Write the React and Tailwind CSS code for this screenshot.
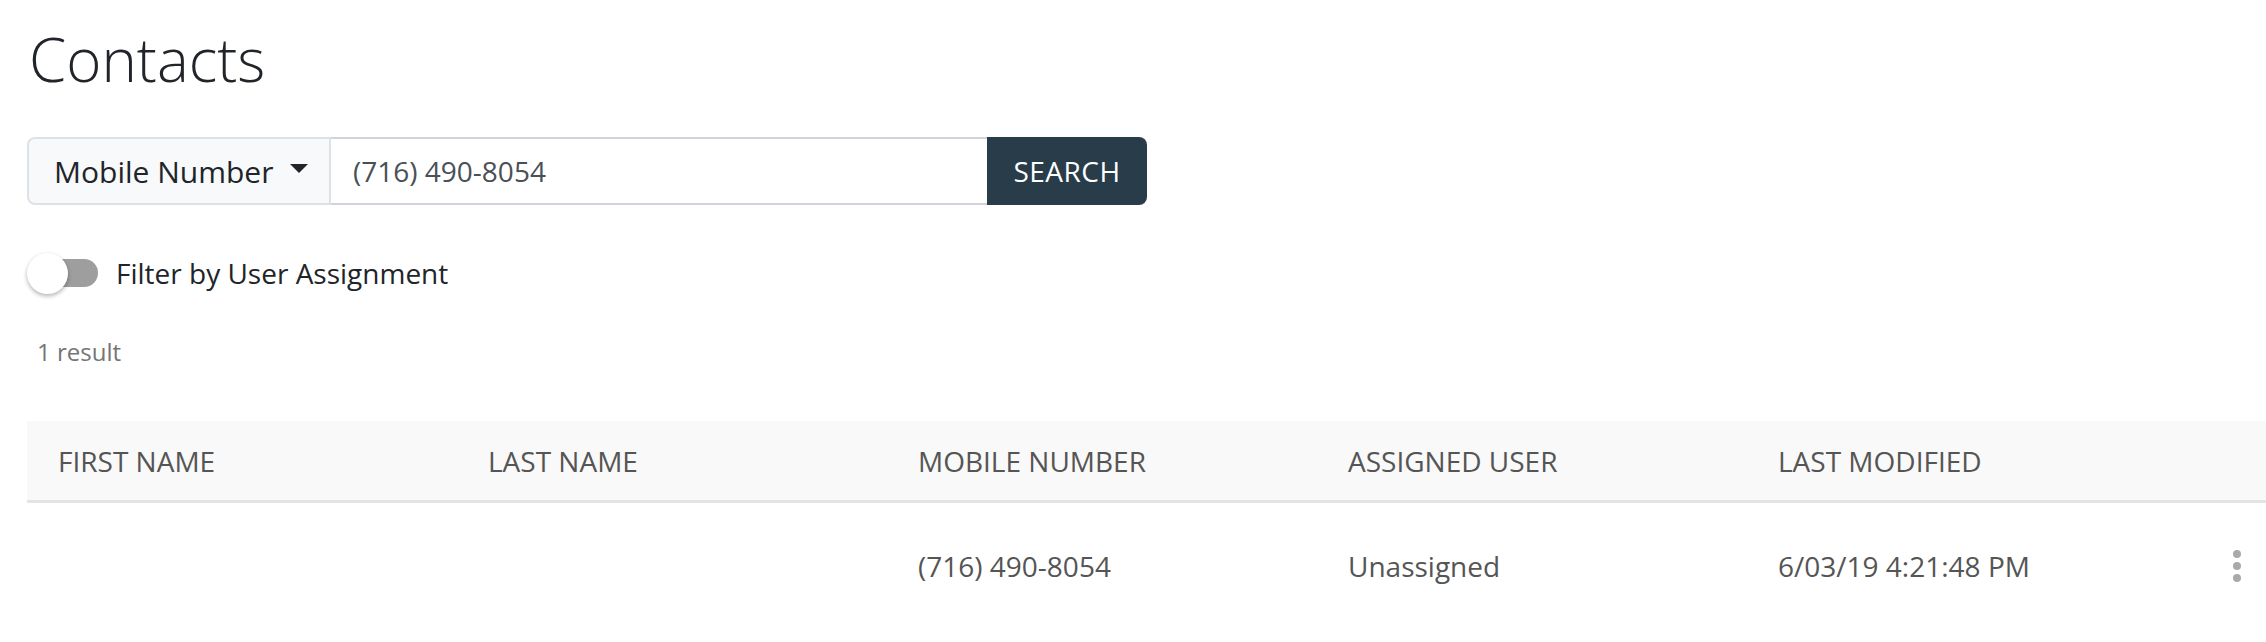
import React from "react";

const columns = ["FIRST NAME", "LAST NAME", "MOBILE NUMBER", "ASSIGNED USER", "LAST MODIFIED"];

const rows = [
  { first: "", last: "", mobile: "(716) 490-8054", user: "Unassigned", modified: "6/03/19 4:21:48 PM" },
];

function Toggle() {
  return (
    <div className="relative w-[71px] h-[41px] flex items-center">
      <div className="ml-[11px] w-[60px] h-[28px] rounded-full bg-[#9e9e9e]" />
      <div className="absolute left-0 top-0 w-[41px] h-[41px] rounded-full bg-white shadow-[0_2px_4px_rgba(0,0,0,0.3)]" />
    </div>
  );
}

export default function App() {
  return (
    <div className="min-h-screen bg-white pl-[27px] pt-[23px] font-['Open_Sans',sans-serif]">
      {/* Title */}
      <h1 className="text-[60px] leading-[72px] font-light text-[#212529] pl-[2px]">Contacts</h1>

      {/* Search group */}
      <div className="mt-[42px] flex h-[68px] w-[1120px]">
        <button className="flex items-center gap-[17px] h-full w-[304px] pl-[25px] bg-[#f8f9fa] border-2 border-[#dee2e6] rounded-l-[8px] text-[30px] text-[#212529]">
          Mobile Number
          <svg width="18" height="10" viewBox="0 0 18 10" className="mt-[-4px]">
            <path d="M0 0 L18 0 L9 9 Z" fill="#212529" />
          </svg>
        </button>
        <div className="flex items-center h-full w-[656px] pl-[22px] border-y-2 border-[#ced4da] text-[28px] text-[#495057]">
          (716) 490-8054
        </div>
        <button className="h-full w-[160px] bg-[#283c49] rounded-r-[8px] text-[28px] text-white tracking-[0.5px]">
          SEARCH
        </button>
      </div>

      {/* Filter toggle */}
      <div className="mt-[47px] flex items-center gap-[18px]">
        <Toggle />
        <span className="text-[28px] text-[#212529]">Filter by User Assignment</span>
      </div>

      <p className="mt-[40px] pl-[10px] text-[24px] leading-[36px] text-[#757575]">1 result</p>

      {/* Table */}
      <div className="mt-[51px]">
        <div className="flex h-[82px] items-center bg-[#f9f9f9] border-b-[3px] border-[#e4e4e4] text-[28px] text-[#555]">
          {columns.map((c) => (
            <div key={c} className="w-[430px] pl-[31px]">{c}</div>
          ))}
        </div>
        {rows.map((r, i) => (
          <div key={i} className="flex h-[125px] items-center text-[28px] text-[#555]">
            <div className="w-[430px] pl-[31px]">{r.first}</div>
            <div className="w-[430px] pl-[31px]">{r.last}</div>
            <div className="w-[430px] pl-[31px]">{r.mobile}</div>
            <div className="w-[430px] pl-[31px]">{r.user}</div>
            <div className="w-[430px] pl-[31px]">{r.modified}</div>
            <div className="ml-[56px] flex flex-col gap-[4px]">
              <span className="w-[8px] h-[8px] rounded-full bg-[#aaa]" />
              <span className="w-[8px] h-[8px] rounded-full bg-[#aaa]" />
              <span className="w-[8px] h-[8px] rounded-full bg-[#aaa]" />
            </div>
          </div>
        ))}
      </div>
    </div>
  );
}
